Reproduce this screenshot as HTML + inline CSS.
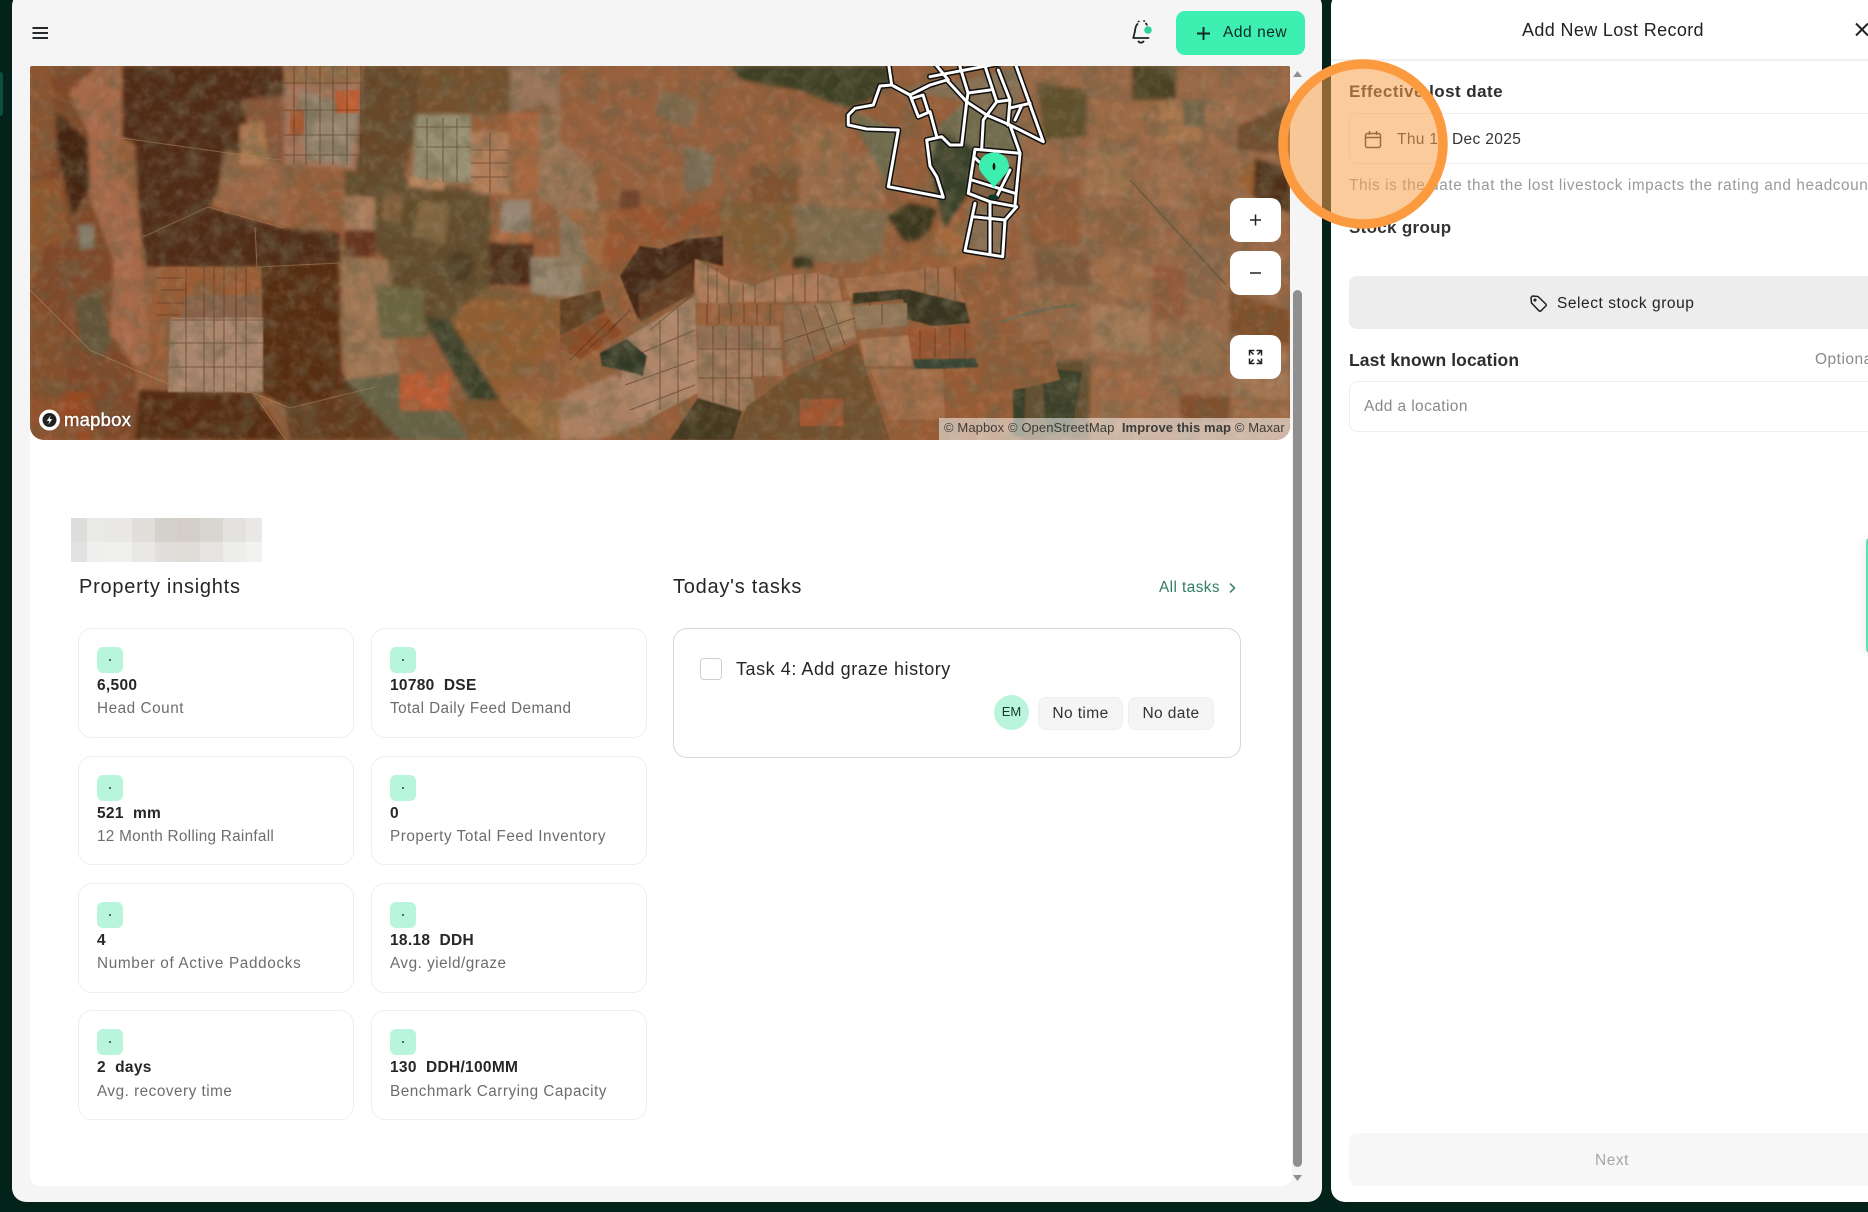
<!DOCTYPE html>
<html><head><meta charset="utf-8"><title>Add New Lost Record</title>
<style>
html,body{margin:0;padding:0;width:1868px;height:1212px;overflow:hidden;background:#03231a;font-family:"Liberation Sans",sans-serif;color:#222}
*{box-sizing:border-box}
.a{position:absolute}
.t{position:absolute;white-space:nowrap;line-height:20px;height:20px}
.card{position:absolute;width:276px;background:#fff;border:1px solid #eeeeee;border-radius:14px}
.ic{position:absolute;left:18px;top:18px;width:26px;height:26px;background:#b9f5dd;border-radius:6px}
.ic:after{content:"";position:absolute;left:12px;top:12px;width:2px;height:2px;border-radius:50%;background:#1d4a3a}
.v{position:absolute;left:18px;top:47px;font-size:15.5px;font-weight:700;line-height:20px;letter-spacing:.3px;white-space:pre;color:#262626}
.l{position:absolute;left:18px;top:70px;font-size:15.3px;line-height:20px;letter-spacing:.42px;white-space:nowrap;color:#6d6d6d}
.mb{position:absolute;left:1230px;width:51px;height:44px;background:#fff;border-radius:10px}
.chip{position:absolute;top:697px;height:33px;background:#f5f5f5;border:1px solid #eeeeee;border-radius:8px;font-size:15.5px;line-height:32px;text-align:center;letter-spacing:.4px;color:#333}
</style></head><body>

<!-- left edge tab -->
<div class="a" style="left:0;top:72px;width:3px;height:44px;background:#0c4f3e;border-radius:0 4px 4px 0"></div>

<!-- left panel -->
<div class="a" style="left:12px;top:-8px;width:1310px;height:1210px;background:#f5f5f5;border-radius:14px"></div>
<!-- white content -->
<div class="a" style="left:30px;top:430px;width:1262px;height:756px;background:#fff;border-radius:0 0 10px 10px"></div>

<!-- hamburger -->
<svg class="a" style="left:30px;top:24px" width="20" height="18" viewBox="0 0 20 18"><path d="M2.5 4H18M2.5 9H18M2.5 14H18" stroke="#26292b" stroke-width="2" fill="none"/></svg>
<!-- bell -->
<svg class="a" style="left:1129px;top:16px" width="28" height="32" viewBox="0 0 28 32" fill="none"><path d="M8.5 8C6.6 10 6.2 12 6 15L4.3 22H19.5" stroke="#1d2326" stroke-width="1.8" stroke-linecap="round" stroke-linejoin="round"/><path d="M9.5 5.5h.3M15 5h.3M17 7.5l.8 1.2" stroke="#1d2326" stroke-width="1.8" stroke-linecap="round"/><path d="M9.5 25.5c1.3 1.6 3.7 1.6 5 0" stroke="#1d2326" stroke-width="1.8" stroke-linecap="round"/><circle cx="19" cy="14" r="3.8" fill="#2fd39a"/></svg>
<!-- add new -->
<div class="a" style="left:1176px;top:11px;width:129px;height:44px;background:#3defb0;border-radius:9px"></div>
<svg class="a" style="left:1195px;top:25px" width="17" height="17" viewBox="0 0 17 17"><path d="M8.5 2v13M2 8.5h13" stroke="#0d2a22" stroke-width="1.9"/></svg>
<div class="t" style="left:1223px;top:23px;font-size:15.5px;font-weight:500;letter-spacing:.55px;color:#0d2a22">Add new</div>

<!-- map -->
<svg class="a" style="left:30px;top:66px;border-radius:2px 2px 14px 14px" width="1260" height="374" viewBox="30 66 1260 374">
<defs>
<filter id="b" x="-2%" y="-2%" width="104%" height="104%"><feGaussianBlur stdDeviation=".7"/></filter>
<filter id="b2" x="-5%" y="-5%" width="110%" height="110%"><feGaussianBlur stdDeviation="2"/></filter>
<filter id="nd" x="0" y="0" width="100%" height="100%"><feTurbulence type="fractalNoise" baseFrequency=".05" numOctaves="4" seed="7"/><feColorMatrix values="0 0 0 0 .14  0 0 0 0 .12  0 0 0 0 .06  3 0 0 0 -1.25"/></filter>
<filter id="nl" x="0" y="0" width="100%" height="100%"><feTurbulence type="fractalNoise" baseFrequency=".09" numOctaves="3" seed="23"/><feColorMatrix values="0 0 0 0 .72  0 0 0 0 .55  0 0 0 0 .42  0 2.4 0 0 -1.1"/></filter>
</defs>
<rect x="30" y="66" width="1260" height="374" fill="#a26c48"/>
<g filter="url(#b2)">
<!-- far left -->
<polygon points="30,66 98,66 88,133 90,200 114,260 110,333 135,367 139,440 30,440" fill="#8a5230"/>
<polygon points="30,66 50,66 55,110 57,150 40,180 30,170" fill="#96603a"/>
<polygon points="30,180 60,180 70,240 45,245 30,290" fill="#9c6438"/>
<polygon points="30,300 62,320 70,400 30,400" fill="#8f5a36"/>
<polygon points="75,300 100,290 112,340 100,360 80,345" fill="#6a6044"/>
<polygon points="30,400 90,395 100,440 30,440" fill="#9e5c36"/>
<polygon points="64,392 90,392 90,440 64,440" fill="#a4542c"/>
<polygon points="55,110 88,140 90,187 73,217 57,150" fill="#4a2a16"/>
<polygon points="78,225 94,225 94,248 80,250" fill="#8f8f80"/>
<polygon points="98,66 122,66 122,140 108,160 135,197 143,267 151,360 135,367 110,333 114,260 90,200 88,133 69,93" fill="#b5795a"/>
<!-- dark blocks -->
<polygon points="122,66 285,66 290,95 262,115 240,160 208,207 141,233 135,143 122,137" fill="#56301a"/>
<polygon points="141,233 208,207 253,220 284,228 339,233 341,263 257,267 147,267" fill="#57301a"/>
<polygon points="261,267 339,263 341,373 375,390 290,408 261,393" fill="#5f3619"/>
<polygon points="139,390 253,393 286,440 135,440" fill="#5c3318"/>
<polygon points="286,408 375,392 400,440 290,440" fill="#6a4324"/>
<polygon points="225,150 285,165 290,228 240,210 215,205" fill="#a97654"/>
<polygon points="240,100 285,95 284,165 260,160" fill="#966244"/>
<polygon points="240,125 262,120 270,165 240,165" fill="#b98a62"/>
<!-- top field region -->
<polygon points="284,66 363,66 363,170 284,165" fill="#b08570"/>
<polygon points="300,90 360,110 350,165 305,160" fill="#a2998a"/>
<polygon points="284,66 363,66 363,84 284,84" fill="#a77e5a"/>
<!-- middle column -->
<polygon points="363,66 420,66 420,115 400,190 375,187 356,170" fill="#6e5232"/>
<polygon points="345,170 416,180 490,195 490,300 424,337 363,277 388,260 345,230" fill="#6a5734"/>
<polygon points="420,200 450,205 445,245 412,235" fill="#8d7550"/>
<polygon points="385,190 405,195 400,225 380,220" fill="#8a6c48"/>
<polygon points="450,250 475,255 470,285 445,280" fill="#54442a"/>
<polygon points="420,66 520,66 510,113 416,115" fill="#7d5b38"/>
<polygon points="416,115 471,115 471,183 412,183" fill="#a3a58f"/>
<polygon points="471,132 508,132 510,195 471,192" fill="#c0906e"/>
<polygon points="408,177 445,180 444,190 408,187" fill="#c79a75"/>
<polygon points="510,66 590,66 600,110 570,130 545,105 510,113" fill="#a58570"/>
<polygon points="510,113 539,113 539,200 510,200" fill="#b5764f"/>
<polygon points="539,113 580,120 600,210 560,210 539,200" fill="#a8866a"/>
<polygon points="580,66 640,66 640,130 600,110" fill="#a3694a"/>
<polygon points="502,200 531,200 531,247 498,247" fill="#a39a8f"/>
<polygon points="498,232 531,232 531,247 498,247" fill="#bd7a50"/>
<polygon points="490,243 533,243 533,285 490,285" fill="#53301e"/>
<polygon points="531,257 580,257 585,297 531,297" fill="#a49a8a"/>
<polygon points="580,240 640,230 620,276 585,290" fill="#a07a54"/>
<polygon points="343,197 375,197 375,230 345,230" fill="#b98f72"/>
<polygon points="345,230 375,230 375,257 345,257" fill="#6e3a20"/>
<polygon points="341,257 388,260 400,373 345,380" fill="#ad8868"/>
<polygon points="375,285 424,290 424,337 380,338" fill="#75744f"/>
<polygon points="490,285 560,298 520,330 470,300" fill="#8c6a45"/>
<polygon points="470,300 585,297 560,336 500,400 440,330" fill="#9e6c3c"/>
<polygon points="424,317 450,320 500,400 470,402" fill="#3f4a30"/>
<polygon points="345,380 400,373 449,410 470,440 400,440" fill="#6d6f54"/>
<polygon points="400,373 449,373 449,410 400,410" fill="#c96a40"/>
<polygon points="450,400 500,400 540,440 470,440" fill="#8d6238"/>
<polygon points="500,400 560,399 620,386 570,440 540,440" fill="#b0804e"/>
<polygon points="560,340 600,353 620,386 571,393" fill="#a5714a"/>
<polygon points="560,399 617,373 647,423 597,440 560,440" fill="#b9937a"/>
<!-- upper middle -->
<polygon points="560,66 700,66 740,66 780,120 750,166 720,216 620,190 560,140" fill="#a46e4c"/>
<polygon points="685,145 715,155 712,185 685,192" fill="#87806c"/>
<polygon points="660,90 700,100 690,130 655,115" fill="#8d7a60"/>
<polygon points="620,190 640,190 640,214 620,214" fill="#7a5038"/>
<polygon points="560,209 607,209 607,263 560,263" fill="#ad7a52"/>
<polygon points="560,209 580,230 590,263 560,270" fill="#9a8a74"/>
<polygon points="610,210 730,200 750,236 720,240 690,232 640,246 620,276 600,270" fill="#a5643a"/>
<polygon points="720,200 790,203 800,256 760,276 720,236" fill="#8f6a40"/>
<polygon points="750,166 797,166 797,203 750,203" fill="#8a5e3e"/>
<polygon points="770,143 797,143 797,168 770,168" fill="#a57048"/>
<polygon points="793,120 850,125 845,160 800,160" fill="#ab7c56"/>
<polygon points="800,160 880,150 885,205 800,210" fill="#a67c5a"/>
<polygon points="793,205 890,210 880,262 800,262" fill="#8e7d5f"/>
<polygon points="793,256 813,256 813,268 793,268" fill="#3a3a20"/>
<polygon points="887,216 910,203 937,209 930,229 910,249" fill="#3d3d24"/>
<polygon points="880,250 950,232 960,262 843,279" fill="#a66e47"/>
<polygon points="950,205 990,262 950,266 935,240" fill="#b3794e"/>
<!-- top green -->
<polygon points="730,66 888,66 890,86 870,100 850,108 835,104 800,90 740,80" fill="#434a2d"/>
<polygon points="848,110 898,130 888,187 943,197 936,176 926,140 966,100 1043,141 1020,153 975,149 968,193 890,190" fill="#7b7e64"/>
<polygon points="898,90 966,80 1020,66 1043,141 966,101" fill="#93836a"/>
<polygon points="940,130 975,149 968,193 945,230 930,166" fill="#3a4a33"/>
<polygon points="980,150 1018,155 1012,204 975,196" fill="#8c6e52"/>
<polygon points="968,205 1015,208 1002,256 965,250" fill="#978068"/>
<!-- right -->
<polygon points="1020,66 1290,66 1290,440 1020,440" fill="#a67858"/>
<polygon points="1037,83 1087,90 1087,137 1044,140" fill="#665c36"/>
<polygon points="1132,66 1176,66 1176,100 1132,100" fill="#514c2a"/>
<polygon points="1159,100 1200,100 1200,143 1159,143" fill="#b8875f"/>
<polygon points="1183,100 1205,100 1205,127 1183,127" fill="#7a7358"/>
<polygon points="1237,127 1290,102 1290,155 1237,150" fill="#7a5a3a"/>
<polygon points="1233,173 1255,158 1253,197" fill="#a9703e"/>
<polygon points="1255,158 1290,170 1290,213 1253,197" fill="#54341e"/>
<polygon points="1230,293 1290,310 1290,345 1230,333" fill="#8a5a30"/>
<polygon points="1020,175 1080,180 1080,245 1030,250" fill="#9e6a46"/>
<polygon points="1033,250 1090,255 1090,285 1035,285" fill="#8a6649"/>
<polygon points="1190,240 1225,250 1215,300 1180,290" fill="#96745a"/>
<polygon points="1030,360 1090,360 1090,440 1010,440" fill="#6a5a3a"/>
<polygon points="1090,370 1140,370 1170,440 1090,440" fill="#ae7a54"/>
<polygon points="1180,395 1230,395 1230,420 1180,420" fill="#8d5a38"/>
<polygon points="930,345 1000,345 1020,440 890,440" fill="#a46b42"/>
<!-- right side rectangular paddocks -->
<polygon points="1085,150 1130,150 1130,195 1085,195" fill="#b08560"/>
<polygon points="1100,205 1150,210 1145,250 1098,245" fill="#98704f"/>
<polygon points="1150,160 1195,165 1190,210 1148,205" fill="#ad8060"/>
<polygon points="1200,190 1232,195 1228,235 1198,232" fill="#9c6e4c"/>
<polygon points="1100,255 1150,260 1148,300 1095,295" fill="#ad7e5a"/>
<polygon points="1155,265 1185,268 1185,320 1152,318" fill="#a0684a"/>
<polygon points="1090,305 1150,310 1150,355 1092,350" fill="#b28c6c"/>
<polygon points="1160,330 1220,330 1220,375 1162,375" fill="#a0805f"/>
<polygon points="1230,350 1290,355 1290,400 1232,395" fill="#b08666"/>
<polygon points="1100,100 1150,100 1150,140 1100,140" fill="#a97a55"/>
<polygon points="1205,100 1235,100 1235,130 1205,130" fill="#b0825e"/>
<polygon points="1235,220 1290,225 1290,285 1235,280" fill="#a97858"/>
<polygon points="1230,400 1290,405 1290,440 1230,440" fill="#ad7c58"/>
</g>
<g filter="url(#b)">
<!-- field patches crisp -->
<polygon points="335,90 359,90 359,113 335,113" fill="#cf6a3c"/>
<polygon points="290,110 304,110 304,135 290,135" fill="#b9653a"/>
<polygon points="157,267 261,267 262,320 170,320 162,375 150,372" fill="#a86a42"/>
<polygon points="186,295 262,295 262,320 180,322" fill="#94705a"/>
<polygon points="170,318 263,318 263,392 168,392" fill="#b89a88"/>
<!-- center cluster -->
<polygon points="695,259 730,279 752,286 780,276 817,273 838,279 842,301 695,303" fill="#bb8d6e"/>
<polygon points="697,304 782,304 782,324 697,324" fill="#a9714c"/>
<polygon points="698,326 780,326 783,376 753,376 755,404 742,411 698,398" fill="#b08c72"/>
<polygon points="698,326 770,326 772,348 698,348" fill="#a08068"/>
<polygon points="783,306 850,301 857,339 787,368" fill="#a07d62"/>
<polygon points="815,305 850,301 856,336 830,345" fill="#b69476"/>
<polygon points="625,339 695,296 698,393 660,413 643,423 620,386" fill="#bd9a84"/>
<polygon points="620,276 640,246 660,249 687,239 723,236 723,266 695,259 693,293 638,319" fill="#4b2e1a"/>
<polygon points="638,296 692,262 694,293 640,322" fill="#6b4226"/>
<polygon points="560,336 603,313 623,333 580,359 560,349" fill="#98562e"/>
<polygon points="560,300 600,290 605,312 560,336" fill="#6a4a2a"/>
<polygon points="600,353 627,339 647,356 643,376 617,369 602,366" fill="#33402e"/>
<polygon points="698,398 742,411 733,440 670,440" fill="#4a4028"/>
<polygon points="747,406 793,373 857,343 890,440 733,440" fill="#7a5a38"/>
<polygon points="800,399 843,399 843,426 800,426" fill="#b0623a"/>
<polygon points="843,279 950,266 965,303 907,293 853,293 850,299" fill="#b27e5c"/>
<polygon points="853,293 907,289 965,303 970,323 933,326 907,319 903,299 853,304" fill="#3a3a26"/>
<polygon points="852,306 907,303 907,326 857,330" fill="#a08a70"/>
<polygon points="860,339 910,335 912,366 865,366" fill="#b98c6c"/>
<polygon points="907,329 970,325 975,359 912,359" fill="#a8623a"/>
<polygon points="913,359 980,358 982,367 915,370" fill="#3e5040"/>
<polygon points="870,369 943,369 945,419 890,420" fill="#b07c58"/>
<polygon points="1012,372 1026,368 1024,436 1014,436" fill="#3d4a30"/>
<polygon points="1042,368 1082,372 1072,430 1046,434" fill="#3f4a32"/>
<polygon points="970,345 1050,340 1060,380 990,395" fill="#9b6a44"/>
</g>
<!-- field lines -->
<g fill="none" stroke="#553423" stroke-width="1.1" opacity=".55">
<path d="M294 66V165M306 66V165M320 66V165M333 66V165M347 66V165M361 66V165M284 83H363M284 110H363M284 135H363M284 155H363"/>
<path d="M427 118V180M443 118V182M457 118V182M416 127H471M416 147H471M490 133V193M471 150H508M471 163H508M471 177H508"/>
<path d="M186 267V392M204 267V392M214 267V392M224 267V392M236 267V392M246 267V392M157 278H186M159 290H186M157 303H184M157 315H180M170 320H263M170 343H263M170 367H263"/>
<path d="M708 265V303M717 268V303M729 278V303M743 284V303M755 284V303M775 278V303M793 274V303M805 274V303M818 274V303M707 304V324M719 304V324M731 304V324M744 304V324M757 304V324M770 304V324"/>
<path d="M713 326V402M726 326V405M739 326V410M752 326V380M763 326V378M698 349H782M698 378H752M783 342L855 318M800 310L815 362M815 305L832 352M830 303L845 345"/>
<path d="M660 320V410M678 308V405M625 360L695 330M625 385L695 360M630 410L695 385M645 300L690 270M650 330L692 295"/>
<path d="M870 298V306M882 304V325M925 268V296M938 267V296M955 267V300M920 330V358M935 328V358M950 328V358M965 328V358"/>
<path d="M570 360L610 320M585 352L622 318M600 342L630 310"/>
<path d="M1130 180L1226 285" stroke="#5a5f48" stroke-width="2"/>
</g>
<g fill="none" stroke="#c4a07e" stroke-width="1.1" opacity=".55">
<path d="M122 138L228 153L282 160M208 207L284 228M255 227L257 267M143 237L208 207M30 290L90 350L135 370L167 383L253 393L290 408L375 387M253 393L286 440M259 267L339 263"/>
</g>
<path d="M1001 322Q1040 308 1076 305" stroke="#6e7a66" stroke-width="3" fill="none" opacity=".7"/>
<rect x="30" y="66" width="1260" height="374" fill="#c9a06e" style="mix-blend-mode:multiply" opacity=".35"/>
<rect x="30" y="66" width="1260" height="374" filter="url(#nd)" opacity=".45"/>
<rect x="30" y="66" width="1260" height="374" filter="url(#nl)" opacity=".14"/>
<!-- property -->
<g fill="none" stroke-linejoin="round" stroke-linecap="round">
<g stroke="#101010" stroke-width="6">
<path d="M888.3 62L891.7 85L880 86L873.3 105L855 108.3L848.3 115L848.3 125L866.7 129L898.3 130L888.3 186.7L943.3 197.3L936.7 176.7L930 166L926.7 140L941.7 136.7L950 145L961.7 145L966.7 101.7"/>
<path d="M891.7 85L910 95L930 85L946.7 80L966.7 101.7L986.7 115L1010 125L1043.3 141.7L1014 60"/>
<path d="M910 95L918.3 116.7L930 111.7L936.7 136.7M913 98L923 95L928 111"/>
<path d="M932 60L948.3 80M930 76.7L1007 62M958 60L968 93L966.7 101.7M968 93L990 90M985 66L996.7 101.7L983.3 120L981.7 148.3M998.3 70L1010 100L1008 125M996.7 101.7L1010 100M1010 108L1030 103.3M1015 120L1021 107M1010 125L1020 153.3"/>
<path d="M975 149.3L1020 153.3L1015 205M975 149.3L968.3 193.3M971.7 180L1015 193.3M1010 170L996.7 196.7M975 158L988 170"/>
<path d="M968.3 193.3L990 201.7L990 253.3M990 201.7L1016.7 206.7L1005 220L1002.7 256.7L965 250.7L975 203.3M973.3 216.7L1005 220"/>
</g>
<g stroke="#fff" stroke-width="3">
<path d="M888.3 62L891.7 85L880 86L873.3 105L855 108.3L848.3 115L848.3 125L866.7 129L898.3 130L888.3 186.7L943.3 197.3L936.7 176.7L930 166L926.7 140L941.7 136.7L950 145L961.7 145L966.7 101.7"/>
<path d="M891.7 85L910 95L930 85L946.7 80L966.7 101.7L986.7 115L1010 125L1043.3 141.7L1014 60"/>
<path d="M910 95L918.3 116.7L930 111.7L936.7 136.7M913 98L923 95L928 111"/>
<path d="M932 60L948.3 80M930 76.7L1007 62M958 60L968 93L966.7 101.7M968 93L990 90M985 66L996.7 101.7L983.3 120L981.7 148.3M998.3 70L1010 100L1008 125M996.7 101.7L1010 100M1010 108L1030 103.3M1015 120L1021 107M1010 125L1020 153.3"/>
<path d="M975 149.3L1020 153.3L1015 205M975 149.3L968.3 193.3M971.7 180L1015 193.3M1010 170L996.7 196.7M975 158L988 170"/>
<path d="M968.3 193.3L990 201.7L990 253.3M990 201.7L1016.7 206.7L1005 220L1002.7 256.7L965 250.7L975 203.3M973.3 216.7L1005 220"/>
</g>
</g>
<ellipse cx="993" cy="197" rx="5" ry="2.5" fill="#0a3a2a"/>
<path d="M994 188C989 180 979 173 979 166.5C979 158.5 985.5 152.5 994 152.5C1002.5 152.5 1009 158.5 1009 166.5C1009 173 999 180 994 188Z" fill="#3ceeb0"/>
<ellipse cx="994" cy="166.5" rx="1.4" ry="3.6" fill="#111"/>
<!-- attribution bg -->
<rect x="939" y="418" width="351" height="22" fill="#fff" opacity=".52"/>
<!-- mapbox logo -->
<circle cx="49.5" cy="420" r="10.5" fill="#fff"/>
<circle cx="49.5" cy="420" r="7" fill="#222"/>
<path d="M50.5 415.5L46.8 421H49.3L48.5 424.5L52.2 419H49.7Z" fill="#fff"/>
</svg>
<div class="t" style="left:64px;top:410px;font-size:18.5px;color:#fff;letter-spacing:.2px;-webkit-text-stroke:.4px #fff;text-shadow:0 0 2px rgba(0,0,0,.5)">mapbox</div>
<div class="t" style="left:944px;top:418px;font-size:13px;letter-spacing:.1px;color:#3b3b38">© Mapbox © OpenStreetMap&nbsp; <b>Improve this map</b> © Maxar</div>

<!-- map buttons -->
<div class="mb" style="top:198px"><svg width="51" height="44"><path d="M25.5 16.5v11M20 22h11" stroke="#222" stroke-width="1.5"/></svg></div>
<div class="mb" style="top:251px"><svg width="51" height="44"><path d="M20 22h11" stroke="#222" stroke-width="1.5"/></svg></div>
<div class="mb" style="top:335px"><svg width="51" height="44" fill="none" stroke="#222" stroke-width="1.5"><path d="M19.5 20.5v-5h5M31.5 20.5v-5h-5M19.5 23.5v5h5M31.5 23.5v5h-5M20 16l3.5 3.5M31 16l-3.5 3.5M20 28l3.5-3.5M31 28l-3.5-3.5"/></svg></div>

<!-- scrollbar -->
<div class="a" style="left:1293px;top:290px;width:9px;height:877px;background:#8f8f8f;border-radius:5px"></div>
<svg class="a" style="left:1292px;top:70px" width="11" height="8"><path d="M5.5 1L10 7H1Z" fill="#8f8f8f"/></svg>
<svg class="a" style="left:1292px;top:1174px" width="11" height="8"><path d="M5.5 7L10 1H1Z" fill="#8f8f8f"/></svg>

<!-- pixelated block -->
<svg class="a" style="left:71px;top:518px" width="191" height="44" viewBox="0 0 191 44" shape-rendering="crispEdges">
<rect x="0" y="0" width="16" height="24" fill="#dcdedc"/><rect x="16" y="0" width="22" height="24" fill="#e9e9e7"/><rect x="38" y="0" width="23" height="24" fill="#e9e8e6"/><rect x="61" y="0" width="23" height="24" fill="#e0dfdb"/><rect x="84" y="0" width="22" height="24" fill="#d5d2cc"/><rect x="106" y="0" width="23" height="24" fill="#d3cfc8"/><rect x="129" y="0" width="23" height="24" fill="#d9d6d1"/><rect x="152" y="0" width="23" height="24" fill="#e3e1de"/><rect x="175" y="0" width="16" height="24" fill="#e9e8e5"/>
<rect x="0" y="24" width="16" height="20" fill="#e1e3e2"/><rect x="16" y="24" width="22" height="20" fill="#efefed"/><rect x="38" y="24" width="23" height="20" fill="#f0f0ee"/><rect x="61" y="24" width="23" height="20" fill="#e9e8e6"/><rect x="84" y="24" width="22" height="20" fill="#e1dfdb"/><rect x="106" y="24" width="23" height="20" fill="#e0ddd9"/><rect x="129" y="24" width="23" height="20" fill="#e6e4e0"/><rect x="152" y="24" width="23" height="20" fill="#ededeb"/><rect x="175" y="24" width="16" height="20" fill="#f2f2f0"/>
</svg>

<div class="t" style="left:79px;top:577px;font-size:20px;letter-spacing:.75px;color:#262626">Property insights</div>
<div class="t" style="left:673px;top:577px;font-size:20px;letter-spacing:.75px;color:#262626">Today's tasks</div>
<div class="t" style="left:1159px;top:578px;font-size:15.3px;letter-spacing:.45px;color:#2f7d66">All tasks</div>
<svg class="a" style="left:1226px;top:581px" width="12" height="14"><path d="M4 2.5L8.5 7L4 11.5" stroke="#2f7d66" stroke-width="1.5" fill="none"/></svg>

<!-- cards -->
<div class="card" style="left:78px;top:628px;height:110px"><div class="ic"></div><div class="v">6,500</div><div class="l" style="letter-spacing:.54px">Head Count</div></div>
<div class="card" style="left:371px;top:628px;height:110px"><div class="ic"></div><div class="v">10780  DSE</div><div class="l">Total Daily Feed Demand</div></div>
<div class="card" style="left:78px;top:756px;height:109px"><div class="ic"></div><div class="v">521  mm</div><div class="l" style="letter-spacing:.28px">12 Month Rolling Rainfall</div></div>
<div class="card" style="left:371px;top:756px;height:109px"><div class="ic"></div><div class="v">0</div><div class="l" style="letter-spacing:.54px">Property Total Feed Inventory</div></div>
<div class="card" style="left:78px;top:883px;height:110px"><div class="ic"></div><div class="v">4</div><div class="l" style="letter-spacing:.66px">Number of Active Paddocks</div></div>
<div class="card" style="left:371px;top:883px;height:110px"><div class="ic"></div><div class="v">18.18  DDH</div><div class="l" style="letter-spacing:.5px">Avg. yield/graze</div></div>
<div class="card" style="left:78px;top:1010px;height:110px"><div class="ic"></div><div class="v">2  days</div><div class="l" style="letter-spacing:.5px;top:71px">Avg. recovery time</div></div>
<div class="card" style="left:371px;top:1010px;height:110px"><div class="ic"></div><div class="v">130  DDH/100MM</div><div class="l" style="letter-spacing:.51px;top:71px">Benchmark Carrying Capacity</div></div>

<!-- task card -->
<div class="a" style="left:673px;top:628px;width:568px;height:130px;background:#fff;border:1px solid #d8d8d8;border-radius:14px"></div>
<div class="a" style="left:700px;top:658px;width:22px;height:22px;background:#fff;border:1px solid #cfcfcf;border-radius:4px"></div>
<div class="t" style="left:736px;top:659px;font-size:18px;letter-spacing:.55px;color:#262626">Task 4: Add graze history</div>
<div class="a" style="left:994px;top:695px;width:35px;height:35px;border-radius:50%;background:#b9f5dd;font-size:13px;line-height:33px;text-align:center;font-weight:500;color:#153a2e">EM</div>
<div class="chip" style="left:1038px;width:85px">No time</div>
<div class="chip" style="left:1128px;width:86px">No date</div>

<!-- right panel -->
<div class="a" style="left:1331px;top:-8px;width:560px;height:1210px;background:#fff;border-radius:14px"></div>
<div class="t" style="left:1522px;top:20px;font-size:18px;font-weight:500;letter-spacing:.36px;color:#222">Add New Lost Record</div>
<svg class="a" style="left:1853px;top:21px" width="15" height="17"><path d="M3 2.5L15 14.5M15 2.5L3 14.5" stroke="#222" stroke-width="2" fill="none"/></svg>
<div class="a" style="left:1331px;top:59px;width:537px;height:2px;background:#f0f0f0"></div>
<div class="t" style="left:1349px;top:82px;font-size:17px;font-weight:700;letter-spacing:.45px;color:#2d2d2d">Effective lost date</div>
<div class="a" style="left:1349px;top:113px;width:560px;height:51px;border:1.5px solid #eeeeee;border-radius:8px"></div>
<svg class="a" style="left:1364px;top:130px" width="19" height="19" fill="none" stroke="#2a2a2a" stroke-width="1.5"><rect x="1.5" y="3.5" width="15" height="14" rx="2"/><path d="M1.5 7.5h15M5.5 1v4M12.5 1v4"/></svg>
<div class="t" style="left:1397px;top:130px;font-size:15.5px;letter-spacing:.35px;color:#333">Thu 18 Dec 2025</div>
<div class="t" style="left:1349px;top:176px;font-size:15.3px;letter-spacing:.6px;color:#9a9a9a">This is the date that the lost livestock impacts the rating and headcount</div>
<div class="t" style="left:1349px;top:218px;font-size:17px;letter-spacing:.3px;font-weight:700;color:#333">Stock group</div>
<div class="a" style="left:1349px;top:276px;width:560px;height:53px;background:#ededee;border-radius:8px"></div>
<svg class="a" style="left:1529px;top:294px" width="19" height="19" fill="none" stroke="#222" stroke-width="1.5" stroke-linejoin="round"><path d="M2 3.5L2.5 9L10 16.8C10.6 17.4 11.4 17.4 12 16.8L16.8 12C17.4 11.4 17.4 10.6 16.8 10L9 2.5L3.5 2Z"/><circle cx="6" cy="6" r=".8" fill="#222"/></svg>
<div class="t" style="left:1557px;top:294px;font-size:15.5px;font-weight:500;letter-spacing:.55px;color:#222">Select stock group</div>
<div class="t" style="left:1349px;top:350px;font-size:17.5px;font-weight:700;letter-spacing:.1px;color:#2d2d2d">Last known location</div>
<div class="t" style="left:1815px;top:350px;font-size:15.5px;letter-spacing:.5px;color:#8a8a8a">Optional</div>
<div class="a" style="left:1349px;top:381px;width:560px;height:51px;border:1.5px solid #eeeeee;border-radius:8px"></div>
<div class="t" style="left:1364px;top:397px;font-size:15.5px;letter-spacing:.4px;color:#8a8a8a">Add a location</div>
<div class="a" style="left:1349px;top:1133px;width:560px;height:53px;background:#f7f7f7;border-radius:8px"></div>
<div class="t" style="left:1595px;top:1151px;font-size:15.5px;letter-spacing:.5px;font-weight:500;color:#a5a5a5">Next</div>
<!-- right tab -->
<div class="a" style="left:1866px;top:538px;width:4px;height:115px;background:#5ce0b0;border-radius:4px 0 0 4px;box-shadow:0 0 10px rgba(0,0,0,.16)"></div>

<!-- orange highlight -->
<svg class="a" style="left:1270px;top:52px" width="190" height="190" viewBox="0 0 190 190"><circle cx="93" cy="92" r="80" fill="rgba(250,160,75,.55)" stroke="#fb9a3e" stroke-width="9.5"/></svg>
</body></html>
